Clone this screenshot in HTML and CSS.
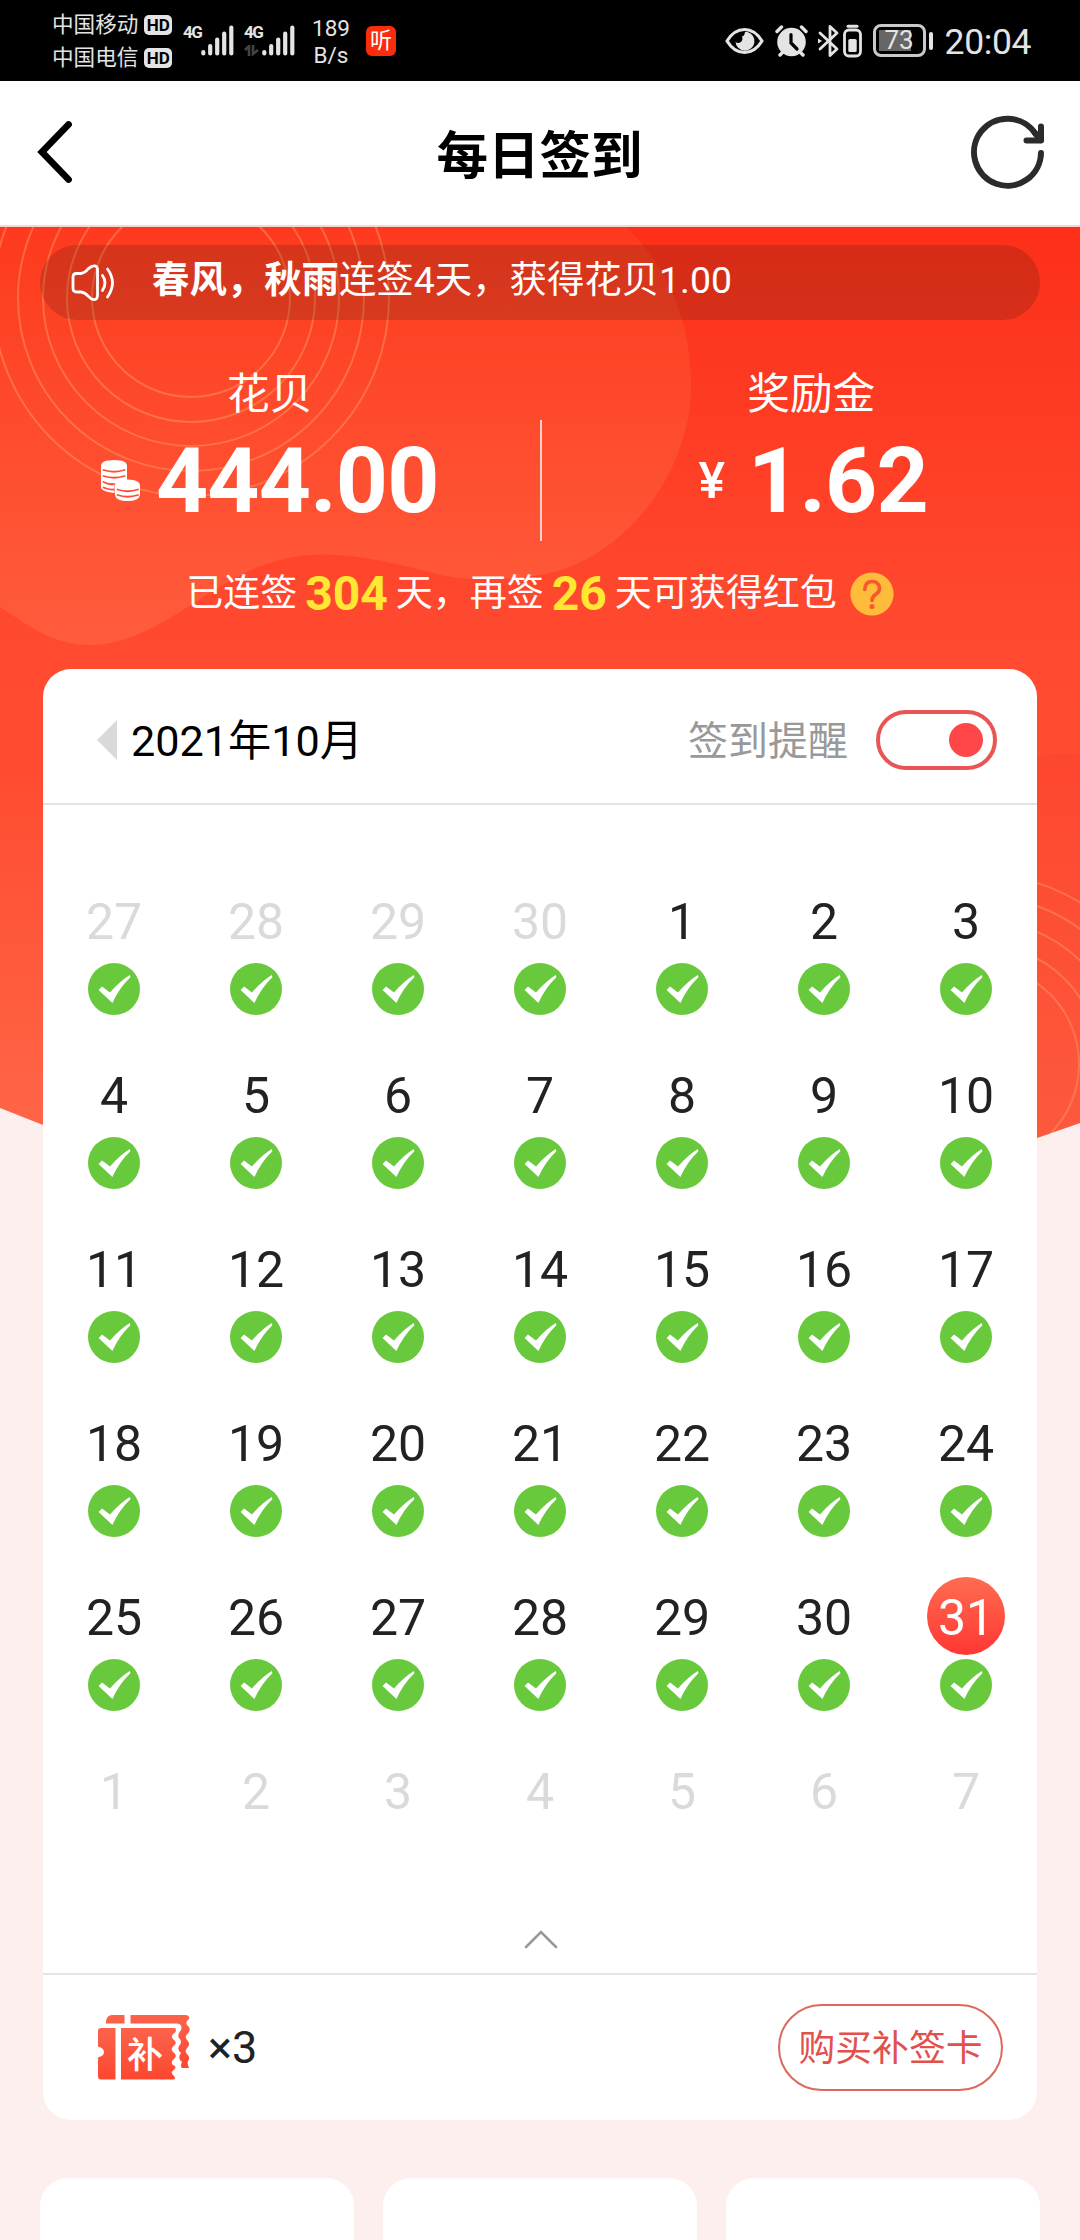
FILE: index.html
```html
<!DOCTYPE html>
<html lang="zh-CN">
<head>
  <meta charset="UTF-8" />
  <meta name="viewport" content="width=device-width, initial-scale=1.0" />
  <title>每日签到</title>
  <link rel="stylesheet" href="styles.css">
</head>
<body>
  <svg class="defs" width="0" height="0">
    <symbol id="check" viewBox="0 0 52 52">
      <circle cx="26" cy="26" r="26" fill="#69c93c"/>
      <path d="M10.6 27 L14 23.6 L22 29.4 Q32 18 41.8 12 L42.4 14.2 Q31 25 24.4 40 Z" fill="#fff"/>
    </symbol>
    <symbol id="signal" viewBox="0 0 33 31">
      <path d="M2.3 27v1.5M9.2 21v7.5M16.2 14.5v14M23.2 8.5v20M30.3 2.5v26" stroke="#e4e4e4" stroke-width="4.2" stroke-linecap="round"/>
    </symbol>
  </svg>

  <div class="page">
    <div class="status-bar">
      <div class="carriers">
        <div class="carrier">中国移动<span class="hd">HD</span></div>
        <div class="carrier">中国电信<span class="hd">HD</span></div>
      </div>
      <div class="network">
        <span class="net-type">4G</span>
        <svg width="33" height="31"><use href="#signal"/></svg>
      </div>
      <div class="network second">
        <div class="net-col">
          <span class="net-type">4G</span>
          <svg width="15" height="11" viewBox="0 0 15 11"><path d="M1 5L5 1v10M9 0v9l5-4" fill="none" stroke="#444" stroke-width="2.6"/></svg>
        </div>
        <svg width="33" height="31"><use href="#signal"/></svg>
      </div>
      <div class="speed"><span>189</span><span>B/s</span></div>
      <div class="app-icon">听</div>

      <div class="status-right">
        <svg class="eye" width="39" height="28" viewBox="0 0 39 28">
          <path d="M2 14Q9 2.5 19.5 2.5T37 14Q30 25.5 19.5 25.5T2 14Z" fill="none" stroke="#e4e4e4" stroke-width="3.2" stroke-linejoin="round"/>
          <path d="M22.5 5A9.5 9.5 0 1 1 10.5 14.500Q12 17 15 15.500Q18.500 13.500 17 9.500Q19.500 9 20 5Z" fill="#e4e4e4"/>
        </svg>
        <svg class="alarm" width="33" height="32" viewBox="0 0 33 32">
          <circle cx="16.5" cy="17" r="14.3" fill="#e4e4e4"/>
          <path d="M2 6.5L6.5 2M31 6.5L26.5 2M5 30l3-3M28 30l-3-3" stroke="#e4e4e4" stroke-width="3.4" stroke-linecap="round"/>
          <path d="M16 9.5v8.5l6 6" fill="none" stroke="#000" stroke-width="3.2" stroke-linecap="round"/>
        </svg>
        <svg class="bluetooth" width="21" height="34" viewBox="0 0 21 34">
          <path d="M2 9l17 16-7 6.5V2.5L19 9 2 25" fill="none" stroke="#e4e4e4" stroke-width="2.8" stroke-linejoin="round" stroke-linecap="round"/>
          <path d="M0 14.5l4 2.5-4 2.5z" fill="#e4e4e4"/>
        </svg>
        <svg class="small-battery" width="19" height="34" viewBox="0 0 19 34">
          <path d="M5 2.2h9" stroke="#e4e4e4" stroke-width="3" stroke-linecap="round"/>
          <rect x="1.5" y="6" width="16" height="26" rx="4.5" fill="none" stroke="#e4e4e4" stroke-width="2.8"/>
          <rect x="5.3" y="15" width="8.4" height="13" rx="1.5" fill="#e4e4e4"/>
        </svg>
        <div class="battery"><div class="battery-body"><span>73</span></div></div>
        <div class="clock">20:04</div>
      </div>
    </div>

    <div class="nav-bar">
      <svg width="36" height="64" viewBox="0 0 36 64"><path d="M31.5 4.5L5 32l26.5 27.5" fill="none" stroke="#000" stroke-width="6.8" stroke-linecap="round"/></svg>
      <h1>每日签到</h1>
      <svg width="76" height="76" viewBox="0 0 76 76">
        <g fill="none" stroke="#2b2b2b" stroke-width="6" stroke-linecap="round" stroke-linejoin="round">
          <path d="M71 39a33.5 33.5 0 1 1-5.5-19.2"/>
          <path d="M56.5 26.5H71V12.5M71 26.5L65 19"/>
        </g>
      </svg>
    </div>

    <div class="main">
      <svg class="hero-bg" width="1080" height="913" viewBox="0 0 1080 913">
        <defs>
          <linearGradient id="red" x1="0" y1="0" x2="0" y2="1">
            <stop offset="0" stop-color="#fd2f18"/>
            <stop offset=".45" stop-color="#ff4a30"/>
            <stop offset=".6" stop-color="#ff4c31"/>
            <stop offset="1" stop-color="#ff6648"/>
          </linearGradient>
          <linearGradient id="glow" x1="0" y1="0" x2="0" y2="1">
            <stop offset="0" stop-color="#ff7a3c" stop-opacity=".14"/>
            <stop offset="1" stop-color="#ff7a55" stop-opacity=".36"/>
          </linearGradient>
          <clipPath id="hero"><path d="M0 0H1080V896L1037 911H60L43 898L0 881Z"/></clipPath>
        </defs>
        <g clip-path="url(#hero)">
          <rect width="1080" height="913" fill="url(#red)"/>
          <path d="M0 0H626C668 40 691 95 691 158C691 250 620 335 540 348C500 354 465 355 430 345C380 333 330 320 280 333C210 350 160 418 88 418C50 418 20 392 0 380Z" fill="url(#glow)"/>
          <path d="M1037 530Q1060 524 1080 528V913H1037Z" fill="#f8432e" opacity=".35"/>
          <g fill="none" stroke="#ff9560" stroke-opacity=".5" stroke-width="2">
            <circle cx="191" cy="71" r="99"/><circle cx="191" cy="71" r="124"/><circle cx="191" cy="71" r="148"/>
            <circle cx="191" cy="71" r="173"/><circle cx="191" cy="71" r="198"/>
            <circle cx="980" cy="837" r="99"/><circle cx="980" cy="837" r="120"/><circle cx="980" cy="837" r="144"/>
            <circle cx="980" cy="837" r="168"/><circle cx="980" cy="837" r="190"/>
          </g>
        </g>
      </svg>

      <div class="notice">
        <svg width="46" height="38" viewBox="0 0 46 38">
          <g fill="none" stroke="#fff" stroke-width="2.8" stroke-linecap="round" stroke-linejoin="round">
            <path d="M5.5 9.5H10Q14 9 17 5L20.5 2.5Q26 .5 26.500 5V32Q26 37 20.5 35L17 32Q14 28.5 10 28H5.5Q2 28 2 24.5V13Q2 9.5 5.5 9.5Z"/>
            <path d="M31.5 11.5Q36.5 18.5 31.5 26.5M36.5 5Q46.5 18.5 36.5 33"/>
          </g>
        </svg>
        <p><b>春风，秋雨</b>连签4天，获得花贝1.00</p>
      </div>

      <div class="stats">
        <div class="stat">
          <div class="label">花贝</div>
          <div class="amount">
            <svg width="40" height="42" viewBox="0 0 40 42">
              <path d="M0 6Q0 0 13 0T26 6V20Q14 20 13.5 26V33Q2 32 0 28Z" fill="#fff"/>
              <path d="M14 26Q14 19.5 26.5 19.5T39 26V35Q38 41 26.5 41T14 35Z" fill="#fff"/>
              <path d="M2.5 10Q13 13.5 23.5 10M2.5 16Q13 19.5 23.5 16M2.5 22Q8 25 13 24M2.5 27.5Q8 30 12.5 29.5M16.5 29.5Q26.5 33 37 29.5M16.5 35Q26.5 38.5 37 35" fill="none" stroke="#fd4e33" stroke-width="1.8" stroke-linecap="round"/>
            </svg>
            <strong>444.00</strong>
          </div>
        </div>
        <div class="divider"></div>
        <div class="stat">
          <div class="label">奖励金</div>
          <div class="amount money"><span class="yen">¥</span><strong>1.62</strong></div>
        </div>
      </div>

      <div class="tip">
        <span>已连签</span><b>304</b><span>天，再签</span><b>26</b><span>天可获得红包</span>
        <svg width="44" height="44" viewBox="0 0 44 44">
          <circle cx="22" cy="22" r="21.6" fill="#ffbc3b"/>
          <path d="M14.8 17.5Q15 9.5 22 9.5T29.5 16.5Q29.5 20 25.5 22.5Q22 25 22 28.5" fill="none" stroke="#f8582f" stroke-width="3.6" stroke-linecap="round"/>
          <circle cx="22" cy="34.5" r="2.5" fill="#f8582f"/>
        </svg>
      </div>

      <div class="card">
        <div class="card-head">
          <div class="prev"></div>
          <div class="month">2021年10月</div>
          <div class="remind">签到提醒</div>
          <div class="switch"><div class="knob"></div></div>
        </div>
        <div class="calendar" id="calendar"></div>
        <div class="fold">
          <svg width="34" height="20" viewBox="0 0 34 20"><path d="M2 18L17 3l15 15" fill="none" stroke="#999" stroke-width="2.6" stroke-linecap="round"/></svg>
        </div>
        <div class="card-foot">
          <svg class="ticket" width="92" height="66" viewBox="0 0 92 66">
            <defs>
              <linearGradient id="tk" x1="0" y1="0" x2="0" y2="1">
                <stop offset="0" stop-color="#fb634b"/><stop offset="1" stop-color="#fd4730"/>
              </linearGradient>
            </defs>
            <path d="M8 8.500V6Q9 0 14 0H26.500V8.500ZM32.500 0H88Q92 1 91 4Q87 7 89 10Q94 13.500 90 18.500Q86 21 89 25Q93 28.500 89.500 32.500Q86 35.500 89 39Q93 42.500 90 46Q89 49 91 53H84Q82 51 84 47Q79 43 83 38Q79 35 81 31Q85 27 81 23Q79 20 83 15Q85 9 79 8.500H32.500Z" fill="url(#tk)"/>
            <path d="M3 13H17.500V64.500H3Q0 64.500 0 61V42.500Q6 41 6 37T0 31.500V16Q0 13 3 13ZM23 13H77Q79 15 77 17.500Q72 20.500 75 24Q80 27.500 76 30.500Q72 34 75 37Q80 40 76 44Q72 47 75 50Q80 52 75 55.500Q72 58 76 61Q78 63 76 64.500H23Z" fill="url(#tk)"/>
            <text x="47" y="53" text-anchor="middle" class="ticket-text">补</text>
          </svg>
          <span class="count">×3</span>
          <button class="buy">购买补签卡</button>
        </div>
      </div>

      <div class="more">
        <div class="more-item"></div>
        <div class="more-item"></div>
        <div class="more-item"></div>
      </div>
    </div>
  </div>

  <script>
    const calendar = document.getElementById("calendar");

    function addDay(day, type, signed) {
      const cell = document.createElement("div");
      cell.className = "day " + type;
      cell.innerHTML = `<span class="num">${day}</span>${signed ? `<svg width="52" height="52"><use href="#check"/></svg>` : ""}`;
      calendar.appendChild(cell);
    }

    for (let d = 27; d <= 30; d++) addDay(d, "other", true);
    for (let d = 1; d <= 31; d++) addDay(d, d === 31 ? "today" : "", true);
    for (let d = 1; d <= 7; d++) addDay(d, "other", false);
  </script>
</body>
</html>
```
FILE: styles.css
```css
* {
  box-sizing: border-box;
}
body {
  margin: 0;
  background: #feefef;
  font-family: Roboto, "Noto Sans CJK SC", sans-serif;
  color: #222;
}
svg {
  display: block;
  flex-shrink: 0;
}
.defs {
  position: absolute;
}
.page {
  width: 1080px;
  height: 2240px;
  overflow: hidden;
}

/* status bar */
.status-bar {
  display: flex;
  height: 81px;
  padding: 0 49px 0 52px;
  background: #000;
  color: #e4e4e4;
}
.carriers {
  width: 131px;
  padding-top: 8px;
}
.carrier {
  display: flex;
  align-items: center;
  height: 33px;
  font-size: 21.6px;
  line-height: 33px;
  white-space: nowrap;
}
.hd {
  width: 28px;
  height: 20px;
  margin-left: 6px;
  border-radius: 5px;
  background: #e4e4e4;
  color: #000;
  font-size: 17px;
  font-weight: bold;
  line-height: 21px;
  text-align: center;
}
.network {
  display: flex;
  height: 31px;
  margin-top: 25px;
}
.network.second {
  margin-left: 10px;
}
.net-type {
  display: block;
  width: 18px;
  height: 15px;
  font-size: 17px;
  font-weight: bold;
  line-height: 15px;
  letter-spacing: -1.5px;
}
.net-col svg {
  margin-top: 5px;
}
.speed {
  display: flex;
  flex-direction: column;
  align-items: center;
  width: 40px;
  margin: 15px 0 0 16px;
  font-size: 22.5px;
  line-height: 27px;
}
.app-icon {
  width: 30px;
  height: 30px;
  margin: 26px 0 0 15px;
  border-radius: 6px;
  background: #f92c0c;
  color: #fff;
  font-size: 22px;
  line-height: 29px;
  text-align: center;
}
.status-right {
  display: flex;
  align-items: center;
  margin-left: auto;
}
.alarm {
  margin-left: 11px;
}
.bluetooth {
  margin-left: 10px;
}
.small-battery {
  margin-left: 4px;
}
.battery {
  display: flex;
  align-items: center;
  margin-left: 11px;
}
.battery::after {
  content: "";
  width: 4px;
  height: 18px;
  margin-left: 3px;
  border-radius: 2px;
  background: #e4e4e4;
}
.battery-body {
  width: 53px;
  height: 33px;
  border: 3px solid #c9c9c9;
  border-radius: 8px;
  padding: 3px;
  background: linear-gradient(#666, #666) 3px 3px / 32px 21px no-repeat;
  font-size: 26px;
  line-height: 21px;
  text-align: center;
}
.clock {
  margin-left: 12px;
  font-size: 35.5px;
  line-height: 81px;
  height: 78px;
  letter-spacing: -0.4px;
}

/* title bar */
.nav-bar {
  display: flex;
  align-items: center;
  justify-content: space-between;
  height: 146px;
  padding: 0 34px 2px 37px;
  border-bottom: 2px solid #f7d6d2;
  background: #fff;
}
.nav-bar h1 {
  margin: 9px 0 0 36px;
  color: #000;
  font-size: 51.5px;
  font-weight: bold;
  line-height: 70px;
}

/* red area */
.main {
  position: relative;
  padding: 18px 40px 0;
}
.hero-bg {
  position: absolute;
  top: 0;
  left: 0;
  z-index: -1;
}
.notice {
  display: flex;
  align-items: center;
  height: 75px;
  padding-left: 31px;
  border-radius: 38px;
  background: rgba(40, 20, 10, 0.18);
  color: #fff;
  font-size: 37.4px;
}
.notice p {
  margin: 0 0 5px 35px;
  line-height: 72px;
}
.stats {
  display: grid;
  grid-template-columns: 1fr 2px 1fr;
  height: 178px;
  margin: 43px -41px 0 -40px;
  color: #fff;
}
.stat {
  text-align: center;
}
.label {
  font-size: 42.7px;
  line-height: 63px;
}
.amount {
  display: flex;
  align-items: center;
  justify-content: center;
  gap: 15px;
  height: 110px;
}
.amount strong {
  font-size: 91px;
  line-height: 110px;
  letter-spacing: -0.8px;
}
.money {
  gap: 23px;
  padding-left: 4px;
}
.yen {
  font-size: 50px;
  font-weight: 500;
}
.divider {
  height: 121px;
  margin-top: 57px;
  background: rgba(255, 255, 255, 0.75);
}
.tip {
  display: flex;
  align-items: center;
  justify-content: center;
  gap: 8px;
  height: 60px;
  margin-top: 23px;
  color: #fff;
  font-size: 37px;
  line-height: 60px;
}
.tip b {
  color: #ffe733;
  font-size: 48px;
}
.tip svg {
  margin-left: 5px;
}

/* calendar card */
.card {
  height: 1451px;
  margin: 45px 3px 0;
  border-radius: 28px;
  background: #fff;
}
.card-head {
  display: flex;
  align-items: center;
  height: 136px;
  padding: 7px 40px 0 54px;
  border-bottom: 2px solid #e5e5e5;
}
.prev {
  border: 20px solid transparent;
  border-left: 0;
  border-right-color: #d9d9d9;
}
.month {
  margin: 0 0 5px 14px;
  color: #000;
  font-size: 43.2px;
}
.remind {
  margin: 0 0 4px auto;
  color: #999;
  font-size: 40px;
}
.switch {
  display: flex;
  align-items: center;
  justify-content: flex-end;
  width: 121px;
  height: 60px;
  margin-left: 28px;
  padding-right: 10px;
  border: 4px solid #e95555;
  border-radius: 30px;
}
.knob {
  width: 34px;
  height: 34px;
  border-radius: 50%;
  background: #ff4649;
}
.calendar {
  display: grid;
  grid-template-columns: repeat(7, 142px);
  grid-auto-rows: 174px;
  padding-top: 76px;
}
.day {
  display: flex;
  flex-direction: column;
  align-items: center;
  gap: 4px;
}
.num {
  width: 78px;
  height: 78px;
  border-radius: 50%;
  font-size: 50px;
  line-height: 82px;
  text-align: center;
}
.other .num {
  color: #dadada;
}
.today .num {
  background: linear-gradient(#ff6c51, #ff3733);
  color: #fff;
}
.fold {
  display: flex;
  justify-content: center;
  height: 50px;
  padding: 4px 0 0 1px;
  border-bottom: 2px solid #e5e5e5;
}
.card-foot {
  display: flex;
  align-items: center;
  height: 145px;
  padding: 0 34px 0 55px;
}
.ticket-text {
  fill: #fff;
  font-size: 36px;
  font-weight: 500;
}
.count {
  margin-left: 18px;
  font-size: 45px;
}
.buy {
  width: 225px;
  height: 87px;
  margin-left: auto;
  padding: 0 0 5px;
  border: 2px solid #dc6a5c;
  border-radius: 44px;
  background: #fff;
  color: #e2504d;
  font-family: inherit;
  font-size: 36.8px;
}

/* bottom entries */
.more {
  display: grid;
  grid-template-columns: repeat(3, 1fr);
  gap: 29px;
  margin-top: 58px;
}
.more-item {
  height: 200px;
  border-radius: 28px;
  background: #fff;
}
```
